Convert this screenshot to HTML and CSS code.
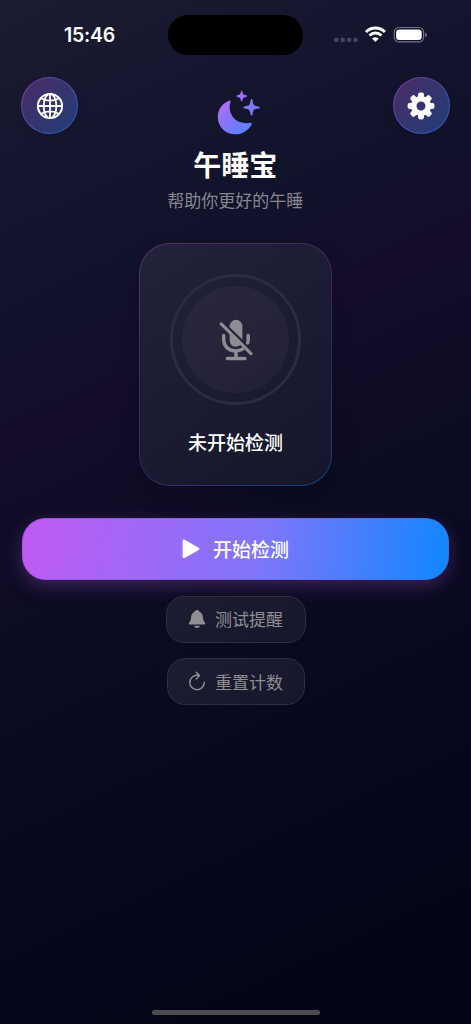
FILE: index.html
```html
<!DOCTYPE html>
<html lang="zh-CN">
<head>
<meta charset="utf-8">
<meta name="viewport" content="width=device-width">
<title>午睡宝</title>
<link rel="stylesheet" href="styles.css">
</head>
<body>
<div class="screen">
  <div class="status">
    <div class="time">15:46</div>
    <div class="island"></div>
    <svg class="indicators" width="96" height="20" viewBox="0 0 96 20">
      <g fill="#44445a"><rect x="1.2" y="12.8" width="4.3" height="4.3" rx="1.3"/><rect x="7.6" y="12.8" width="4.3" height="4.3" rx="1.3"/><rect x="14" y="12.8" width="4.3" height="4.3" rx="1.3"/><rect x="20.3" y="12.8" width="4.3" height="4.3" rx="1.3"/></g>
      <g fill="none" stroke="#fff" stroke-width="2.9"><path d="M33 6.9A13.3 13.3 0 0 1 51.9 6.9"/><path d="M36.5 10.5A8.5 8.5 0 0 1 48.4 10.5"/></g>
      <path d="M42.4 17.1L39 13.6A4.9 4.9 0 0 1 45.8 13.6Z" fill="#fff"/>
      <rect x="61.2" y="2.5" width="29.4" height="14.4" rx="4.7" fill="none" stroke="#75758a" stroke-width="1.1"/>
      <rect x="63.1" y="4.4" width="25.6" height="10.6" rx="3.2" fill="#fff"/>
      <path d="M92.1 7.5q1.8.7 1.8 2.4t-1.8 2.4z" fill="#75758a"/>
    </svg>
  </div>
  <header class="header">
    <button class="round" aria-label="语言">
      <svg width="28" height="28" viewBox="0 0 28 28" fill="none" stroke="#fff" stroke-width="1.8"><circle cx="14" cy="14" r="12.1" stroke-width="2"/><ellipse cx="14" cy="14" rx="6.4" ry="12.1"/><path d="M14 1.8v24.4M1.8 14h24.4M5 6.2Q14 11.2 23 6.2M5 21.8Q14 16.8 23 21.8"/></svg>
    </button>
    <div class="brand">
      <svg class="moon" width="44" height="46" viewBox="0 0 44 46">
        <defs><linearGradient id="night" gradientUnits="userSpaceOnUse" x1="0" y1="2" x2="40" y2="46"><stop offset="0" stop-color="#bf5af2"/><stop offset=".18" stop-color="#b26af8"/><stop offset="1" stop-color="#3f86ff"/></linearGradient></defs>
        <g fill="url(#night)"><path d="M12.2 10.7C13.1 10.2 13.9 10.8 13.5 11.8C10 22.8 18 35.5 33.4 32.8C34.6 32.6 35.2 33.4 34.6 34.4C31.7 40 25.5 44.3 18.4 44.3C8.2 44.3.8 36.7.8 26.7C.8 19.3 5.4 13.2 12.2 10.7Z"/><path d="M24.6.8Q25.2.8 25.4 1.8C26 4.5 26.2 4.7 28.9 5.3Q29.9 5.6 29.9 6.1T28.9 6.9C26.2 7.5 26 7.7 25.4 10.4Q25.2 11.3 24.6 11.3T23.9 10.4C23.3 7.7 23.1 7.5 20.4 6.9Q19.4 6.6 19.4 6.1T20.4 5.3C23.1 4.7 23.3 4.5 23.9 1.8Q24.1.8 24.6.8Z"/><path d="M34.6 9.1Q35.4 9.1 35.6 10.3C36.3 15.3 36.7 15.7 41.7 16.4Q42.9 16.7 42.9 17.4T41.7 18.4C36.7 19.1 36.3 19.5 35.6 24.5Q35.4 25.6 34.6 25.6T33.6 24.5C32.9 19.5 32.5 19.1 27.5 18.4Q26.3 18.1 26.3 17.4T27.5 16.4C32.5 15.7 32.9 15.3 33.6 10.3Q33.8 9.1 34.6 9.1Z"/></g>
      </svg>
      <h1>午睡宝</h1>
      <p>帮助你更好的午睡</p>
    </div>
    <button class="round" aria-label="设置">
      <svg width="28" height="28" viewBox="-14 -14 28 28">
        <defs><rect id="tooth" x="-2.9" y="-13.4" width="5.8" height="7" rx="1.8"/></defs>
        <g fill="#fff"><use href="#tooth"/><use href="#tooth" transform="rotate(45)"/><use href="#tooth" transform="rotate(90)"/><use href="#tooth" transform="rotate(135)"/><use href="#tooth" transform="rotate(180)"/><use href="#tooth" transform="rotate(225)"/><use href="#tooth" transform="rotate(270)"/><use href="#tooth" transform="rotate(315)"/></g>
        <circle r="7.3" fill="none" stroke="#fff" stroke-width="5.6"/>
      </svg>
    </button>
  </header>
  <main class="content">
    <section class="card">
      <div class="ring"><div class="disc">
        <svg width="34" height="42" viewBox="0 0 34 42" fill="none" stroke-linecap="round">
          <g fill="#8e8d93"><path d="M10.6 8.2V7.2A6.4 6.4 0 0 1 23.4 7.2V20.6Z"/><path d="M10.6 14.2L22 25.6Q20.2 27.7 17 27.7Q10.6 27.2 10.6 20.4Z"/></g>
          <path d="M4.7 16.6V20.3C4.7 27.7 10 31.9 16.8 31.9Q20.5 31.9 23.4 30.3M29.2 16.6V20.3Q29.2 22.3 28.7 23.8M17 32V38.8M8.4 39.5H25.9" stroke="#8e8d93" stroke-width="3.5"/>
          <path d="M2.2 4.9L32 34.7" stroke="#8e8d93" stroke-width="3.1"/>
        </svg>
      </div></div>
      <h2>未开始检测</h2>
    </section>
    <button class="primary">
      <svg width="18" height="20" viewBox="0 0 18 20"><path d="M2 2L16 9.9L2 17.8Z" fill="#fff" stroke="#fff" stroke-width="2.8" stroke-linejoin="round"/></svg>
      <span>开始检测</span>
    </button>
    <button class="secondary wide">
      <svg width="18" height="20" viewBox="0 0 18 20" fill="#8e8e93"><path d="M9 1C10.4 1 11.2 1.8 11.4 2.8C14 3.8 14.9 6.2 15 9C15.1 11.4 16 12.5 17 13.7C17.5 14.4 17.2 15.5 16.1 15.5H1.9C.8 15.5.5 14.4 1 13.7C2 12.5 2.9 11.4 3 9C3.1 6.2 4 3.8 6.6 2.8C6.8 1.8 7.6 1 9 1Z"/><path d="M6 16.7H12Q11.4 19 9 19T6 16.7Z"/></svg>
      <span>测试提醒</span>
    </button>
    <button class="secondary">
      <svg width="18" height="20" viewBox="0 0 18 20" fill="none" stroke="#8e8e93" stroke-width="1.45" stroke-linecap="round" stroke-linejoin="round"><path d="M16.2 11.5A7.2 7.2 0 1 1 9 4.3H11.4M8.2 1.2L11.6 4.5L8.2 7.9"/></svg>
      <span>重置计数</span>
    </button>
  </main>
  <div class="home"></div>
</div>
</body>
</html>
```
FILE: styles.css
```css
* { box-sizing: border-box; }
body { margin: 0; background: #030312; }
button { font: inherit; color: inherit; padding: 0; border: 0; }
h1, h2, p { margin: 0; white-space: nowrap; }
svg { display: block; flex: none; }

.screen {
  width: 471px;
  height: 1024px;
  overflow: hidden;
  display: flex;
  flex-direction: column;
  color: #fff;
  font-family: "Noto Sans CJK SC", sans-serif;
  background: linear-gradient(155.3deg, #1b1b31 0%, #11132b 25%, #150d29 36%, #0c0c22 51%, #07081d 72%, #020313 100%);
}

.status {
  height: 77px;
  padding-top: 15px;
  display: grid;
  grid-template-columns: 168px 135px 1fr;
  align-items: start;
}
.time {
  padding: 9px 0 0 64px;
  font: 600 19.5px/23px Inter, sans-serif;
  letter-spacing: -.25px;
}
.island { height: 40px; border-radius: 20px; background: #000; }
.indicators { margin: 10px 0 0 30px; }

.header {
  height: 166px;
  padding: 0 21.5px 0 21px;
  display: flex;
  justify-content: space-between;
  align-items: flex-start;
}
.round {
  width: 57px;
  height: 57px;
  border: 1px solid transparent;
  border-radius: 50%;
  display: grid;
  place-items: center;
  background:
    linear-gradient(135deg, #4b2b66, #1f3e78) padding-box,
    linear-gradient(135deg, #7440a0, #285eb5) border-box;
  box-shadow: 0 3px 8px rgba(0, 0, 0, .12);
}
.brand { display: flex; flex-direction: column; align-items: center; }
.moon { margin: 13px 0 0 7px; }
h1 { margin-top: 8px; font-size: 28px; line-height: 41px; font-weight: 700; }
p { margin-top: 2px; font-size: 17px; line-height: 25px; color: #87868d; }

.content { display: flex; flex-direction: column; align-items: center; }
.card {
  width: 193px;
  height: 243px;
  padding-top: 30px;
  border: 1px solid transparent;
  border-radius: 31px;
  display: flex;
  flex-direction: column;
  align-items: center;
  background:
    linear-gradient(145deg, #222238, #1b1b32 50%, #15162b) padding-box,
    linear-gradient(140deg, #54306f, #312a5c 55%, #18447b) border-box;
  box-shadow: 0 10px 22px rgba(0, 0, 0, .2);
}
.ring {
  width: 131px;
  height: 131px;
  border: 3.5px solid #2d2c3f;
  border-radius: 50%;
  display: grid;
  place-items: center;
}
.disc {
  width: 107px;
  height: 107px;
  border-radius: 50%;
  display: grid;
  place-items: center;
  background: linear-gradient(145deg, #29283b, #222036);
}
h2 { margin-top: 23px; font-size: 19px; line-height: 28px; font-weight: 500; }

.primary {
  width: 427px;
  height: 62px;
  margin-top: 32px;
  padding-bottom: 1px;
  border-radius: 24px;
  display: flex;
  justify-content: center;
  align-items: center;
  gap: 13px;
  font-size: 19px;
  line-height: 28px;
  font-weight: 500;
  background: linear-gradient(98deg, #c05af2, #7f76fa 56%, #1486ff 98%);
  box-shadow: 0 6px 18px rgba(191, 90, 242, .28), inset 0 0 0 1px rgba(95, 85, 190, .3);
}
.secondary {
  width: 138px;
  height: 47px;
  margin-top: 15.5px;
  padding-bottom: 1px;
  border: 1px solid #302f41;
  border-radius: 18px;
  display: flex;
  justify-content: center;
  align-items: center;
  gap: 9px;
  background: linear-gradient(145deg, #1d1c31, #17172b);
  color: #8e8e93;
  font-size: 17px;
  line-height: 25px;
}
.wide { width: 140px; }
.home {
  width: 168px;
  height: 5px;
  margin: auto auto 9px;
  border-radius: 3px;
  background: #4c4b4e;
}
```
